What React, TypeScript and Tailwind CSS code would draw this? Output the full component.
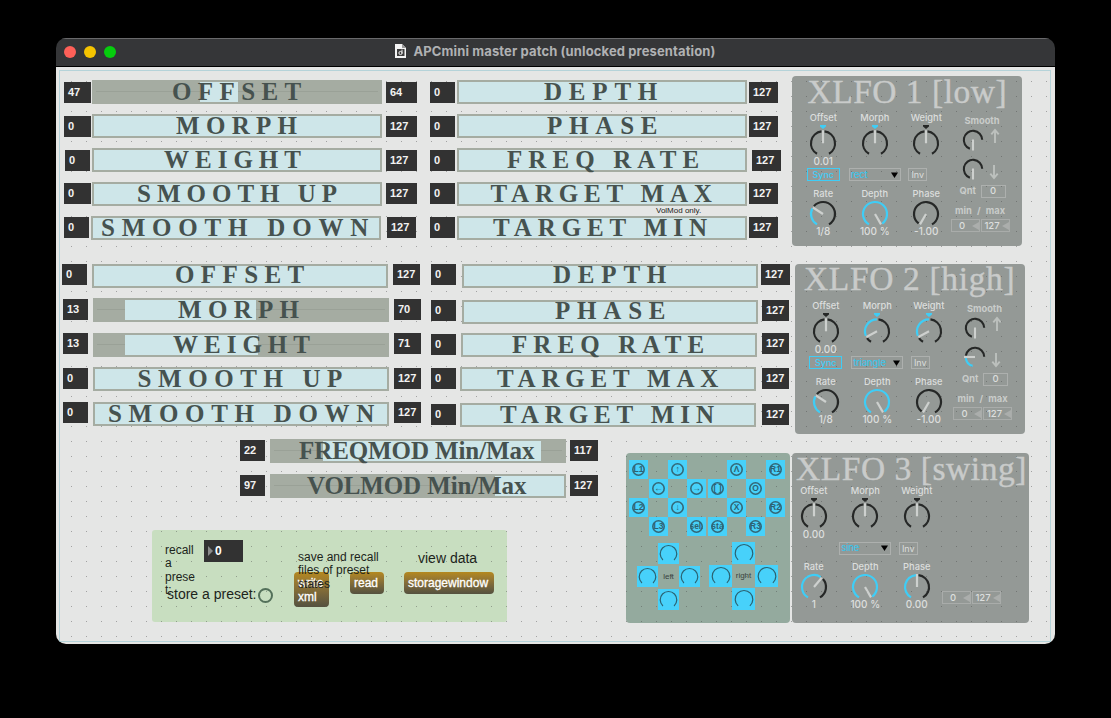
import type { ReactNode } from "react";

const CYAN = "#3fcdf6";
const INK = "#262827";
const PALE = "#cdd0ce";

/* ---------- number boxes and range sliders ---------- */

function NumberBox({ value, className }: { value: number; className: string }) {
  return (
    <div
      className={`flex h-[21px] shrink-0 items-center bg-[#323232] pl-1 font-['Liberation_Sans',sans-serif] text-[11px] leading-none font-bold text-[#f2f2f2] ${className}`}
    >
      {value}
    </div>
  );
}

type RowProps = {
  label: string;
  low?: number;
  high?: number;
  row?: string;
  left: string;
  slider: string;
  right: string;
  text: string;
};

function RangeRow({ label, low = 0, high = 127, row = "", left, slider, right, text }: RowProps) {
  return (
    <div className={`flex h-6 items-start ${row}`}>
      <NumberBox value={low} className={left} />
      <div className={`relative h-6 shrink-0 bg-[#a5aca2] p-0.5 ${slider}`}>
        <div className="relative h-5">
          <div className="absolute inset-x-0.5 top-[9px] h-px bg-[#9aa197]" />
          <div
            className="absolute inset-y-0 bg-[#cee6e9]"
            style={{ left: `${(low / 127) * 100}%`, width: `${((high - low) / 127) * 100}%` }}
          />
        </div>
        <div
          className={`absolute inset-0 font-['Liberation_Serif',serif] text-[25px] leading-6 font-bold whitespace-nowrap text-[#46524f] ${text}`}
        >
          {label}
        </div>
      </div>
      <NumberBox value={high} className={right} />
    </div>
  );
}

function Bank({ className, children }: { className: string; children: ReactNode }) {
  return <div className={`absolute flex flex-col ${className}`}>{children}</div>;
}

/* ---------- dials ---------- */

function polar(cx: number, cy: number, r: number, deg: number) {
  const a = (deg * Math.PI) / 180;
  return [cx + r * Math.sin(a), cy - r * Math.cos(a)];
}

function arc(cx: number, cy: number, r: number, from: number, to: number) {
  const [x1, y1] = polar(cx, cy, r, from);
  const [x2, y2] = polar(cx, cy, r, to);
  return `M${x1} ${y1}A${r} ${r} 0 ${to - from > 180 ? 1 : 0} 1 ${x2} ${y2}`;
}

type DialSpec = { angle: number; dark: [number, number][]; lit?: [number, number]; marker?: string };

function Dial({ spec, top }: { spec: DialSpec; top: boolean }) {
  const cy = top ? 19.3 : 14;
  const { angle, dark, lit, marker } = spec;
  const [nx, ny] = polar(15, cy, angle === 0 ? 13 : 12, angle);
  return (
    <svg width="30" height={top ? 31 : 25} className="block shrink-0 overflow-visible" fill="none" strokeWidth="2.2">
      {marker && <path d="M12 1h6v1.6L15 5l-3-2.4z" fill={marker} />}
      {dark.map(([a, b]) => (
        <path key={a} d={arc(15, cy, 12, a, b)} stroke={INK} />
      ))}
      {lit && <path d={arc(15, cy, 12, lit[0], lit[1])} stroke={CYAN} />}
      <path d={`M15 ${cy}L${nx} ${ny}`} stroke={PALE} />
    </svg>
  );
}

function SmallDial({ lit }: { lit: boolean }) {
  return (
    <svg width="24" height="24" className="block shrink-0" fill="none" strokeWidth="2.1">
      <path d={arc(12, 12, 9.2, lit ? -82 : -160, 88)} stroke={INK} />
      {lit && <path d={arc(12, 12, 9.2, -165, -95)} stroke={CYAN} />}
      <path d={lit ? "M12 12H1" : "M12 11.5V22.5"} stroke={PALE} />
    </svg>
  );
}

function Arrow({ down, className }: { down?: boolean; className: string }) {
  return (
    <svg width="10" height="15" className={`block shrink-0 ${className}`} fill="none" stroke="#bcc0bd" strokeWidth="1.9">
      <path d={down ? "M5 0V13.5M1.3 8.6L5 13L8.7 8.6" : "M5 15V1.5M1.3 6.4L5 2L8.7 6.4"} />
    </svg>
  );
}

function SelectBox({ value }: { value: string }) {
  return (
    <div className="flex h-[13px] w-[52px] shrink-0 items-center justify-between border border-[#adb0ae] pr-[2px] pl-px text-[9.5px] leading-none font-medium text-[#3fc3e8]">
      <span className="tracking-tight">{value}</span>
      <svg width="7" height="6" className="block">
        <path d="M0 .5h7L3.5 6z" fill="#000" />
      </svg>
    </div>
  );
}

function Caption({ children, className = "" }: { children: ReactNode; className?: string }) {
  return (
    <div className={`flex h-3 shrink-0 items-center justify-center text-[9.3px] leading-none font-medium whitespace-nowrap ${className}`}>
      {children}
    </div>
  );
}

function MinMaxBoxes() {
  return (
    <div className="flex gap-px">
      {["0", "127"].map((v) => (
        <div
          key={v}
          className="flex h-[13px] w-[29px] items-center justify-end border border-[#a9acaa] text-[9.5px] leading-none font-medium"
        >
          <span className="flex-1 text-center">{v}</span>
          <svg width="7" height="8" className="-ml-px block shrink-0">
            <path d="M7 0v8L0 4z" fill="#abaeac" />
          </svg>
        </div>
      ))}
    </div>
  );
}

type LfoProps = {
  title: string;
  titleClass: string;
  className: string;
  bodyClass: string;
  wave: string;
  offset: string;
  rate: string;
  phase: string;
  sync?: boolean;
  dials: DialSpec[];
  side: ReactNode;
};

function Lfo({ title, titleClass, className, bodyClass, wave, offset, rate, phase, sync, dials, side }: LfoProps) {
  const columns = [
    {
      top: "Offset",
      value: offset,
      control: sync ? (
        <div className="flex h-[13px] w-[33px] items-center justify-center border border-[#3fcdf6] text-[9px] leading-none font-medium text-[#3fcdf6]">
          Sync
        </div>
      ) : null,
      bottom: "Rate",
      reading: rate,
    },
    { top: "Morph", value: "", control: <SelectBox value={wave} />, bottom: "Depth", reading: "100 %" },
    {
      top: "Weight",
      value: "",
      control: (
        <div className="mr-[17px] flex h-[13px] w-[19px] items-center justify-center border border-[#adb0ae] text-[9px] leading-none">
          Inv
        </div>
      ),
      bottom: "Phase",
      reading: phase,
    },
  ];
  return (
    <div className={`absolute flex h-[170px] flex-col font-[Inter,sans-serif] text-[#dcdedd] ${className}`}>
      <div
        className={`shrink-0 font-['Liberation_Serif',serif] text-[33.5px] leading-[34px] whitespace-nowrap text-[#c9cbca] [-webkit-text-stroke:0.4px_#c9cbca] ${titleClass}`}
      >
        {title}
      </div>
      <div className={`flex ${bodyClass}`}>
        {columns.map((c, i) => (
          <div key={c.top} className="flex w-[51.5px] shrink-0 flex-col items-center">
            <Caption>{c.top}</Caption>
            <Dial spec={dials[i]} top />
            <Caption className="!text-[10px]">{c.value}</Caption>
            <div className="mt-[1.5px] flex h-[13px] justify-center">{c.control}</div>
            <Caption className="mt-[6.5px]">{c.bottom}</Caption>
            <Dial spec={dials[i + 3]} top={false} />
            <Caption className="!text-[10px]">{c.reading}</Caption>
          </div>
        ))}
        {side}
      </div>
    </div>
  );
}

function SmoothSide({ lit }: { lit: boolean }) {
  return (
    <div className="-ml-[1.5px] flex w-[59px] shrink-0 flex-col pt-[3px]">
      <Caption className="pl-1 !font-bold text-[#c9ccca]">Smooth</Caption>
      <div className="mt-px flex h-[29px] pl-[10px]">
        <SmallDial lit={false} />
        <Arrow className="ml-[5px]" />
      </div>
      <div className="flex h-[28px] pl-[10px]">
        <SmallDial lit={lit} />
        <Arrow down className="mt-[8px] ml-[4px]" />
      </div>
      <div className="flex h-[13px] items-center pl-[9px]">
        <span className="w-[21px] text-[9.3px] leading-none font-bold text-[#c9ccca]">Qnt</span>
        <div className="flex h-[13px] w-[25px] items-center justify-center border border-[#adb0ae] text-[9.5px] leading-none font-medium">
          0
        </div>
      </div>
      <Caption className="mt-[7.5px] mb-[2px] !font-bold [word-spacing:3px] text-[#c9ccca]">min / max</Caption>
      <MinMaxBoxes />
    </div>
  );
}

/* ---------- game pad ---------- */

const PAD: (string | null)[] = [
  "L1", null, "↑", null, null, "Λ", null, "R1",
  null, "←", null, "→", "[ ]", null, "O", null,
  "L2", null, "↓", null, null, "X", null, "R2",
  null, "L3", null, "sel.", "sta", null, "R3", null,
];

function PadButtons() {
  return (
    <div className="absolute top-[392px] left-[573px] grid auto-rows-[19px] grid-cols-[20px_19px_19px_21px_19px_19px_20px_19px] pt-px">
      {PAD.map((t, i) => (
        <div key={i} className={t ? "flex size-[19px] items-center justify-center bg-[#47d1fa]" : ""}>
          {t && (
            <div className="flex size-[13px] items-center justify-center overflow-hidden rounded-full text-[8.5px] leading-none font-bold whitespace-nowrap text-[#2d6273] ring-[1.6px] ring-[#346878] ring-inset">
              {t}
            </div>
          )}
        </div>
      ))}
    </div>
  );
}

function Stick({ label, className, size }: { label: string; className: string; size: number }) {
  const r = size / 2 - 2.2;
  return (
    <div className={`absolute grid ${className}`}>
      {Array.from({ length: 9 }, (_, i) =>
        i === 4 ? (
          <div key={i} className="flex items-center justify-center text-[8px] text-[#39443f]">
            {label}
          </div>
        ) : i % 2 === 1 ? (
          <div key={i} className="flex items-center justify-center bg-[#47d1fa]">
            <svg width={size} height={size} className="block" fill="none">
              <path d={arc(size / 2, size / 2 + 0.3, r, -138, 138)} stroke="#2b6272" strokeWidth="1.2" />
            </svg>
          </div>
        ) : (
          <div key={i} />
        )
      )}
    </div>
  );
}

/* ---------- presets ---------- */

function Message({ children, className }: { children: ReactNode; className: string }) {
  return (
    <div
      className={`absolute flex rounded-[4px] bg-linear-to-b from-[#b5891d] to-[#54513f] pl-1 text-[12px] text-white [-webkit-text-stroke:0.3px_white] ${className}`}
    >
      {children}
    </div>
  );
}

function Presets() {
  return (
    <div className="absolute top-[463px] left-24 h-[92px] w-[355px] font-['Liberation_Sans',sans-serif] text-[#1c241b]">
      <div className="absolute top-[14px] left-[13px] w-[30px] text-[12px] leading-[13.4px]">
        recall
        <br />a<br />
        prese
        <br />
        t:
      </div>
      <div className="absolute top-[10px] left-[52px] flex h-[22px] w-[39px] items-center bg-[#323232] pl-1 text-[12px] font-bold text-white">
        <svg width="5" height="10" className="mr-[2px] block">
          <path d="M0 0v10l5-5z" fill="#8a8a8a" />
        </svg>
        0
      </div>
      <div className="absolute top-[55px] left-[15px] flex items-center text-[14px] leading-4 whitespace-nowrap">
        store a preset:
        <span className="mt-[3px] ml-px size-[15px] rounded-full border-2 border-[#53705a]" />
      </div>
      <Message className="top-[42px] left-[142px] h-[35px] w-[35px] pt-[4px] leading-[14px]">
        write
        <br />
        xml
      </Message>
      <Message className="top-[42px] left-[198px] h-[22px] w-[34px] items-center leading-none">read</Message>
      <Message className="top-[42px] left-[252px] h-[22px] w-[90px] items-center leading-none">storagewindow</Message>
      <div className="absolute top-[21px] left-[146px] w-[86px] text-[12px] leading-[13.3px] whitespace-nowrap">
        save and recall
        <br />
        files of preset
        <br />
        states
      </div>
      <div className="absolute top-[20px] left-[266px] text-[14px] leading-4 whitespace-nowrap">view data</div>
    </div>
  );
}

/* ---------- window ---------- */

function TitleBar() {
  return (
    <header className="relative flex h-[29px] shrink-0 items-center justify-center border-t border-b border-t-[#69696b] border-b-black bg-[#353638]">
      <div className="absolute top-[7px] left-2 flex gap-2">
        <i className="size-3 rounded-full bg-[#fe6058]" />
        <i className="size-3 rounded-full bg-[#f5c400]" />
        <i className="size-3 rounded-full bg-[#06cd0d]" />
      </div>
      <svg width="11" height="14" viewBox="0 0 11 14" className="-mt-[3px] mr-[7px] block">
        <path d="M0 0h7l4 4v10H0z" fill="#f4f4f4" />
        <path d="M7 0v4h4" fill="#9a9a9a" />
        <rect x="2" y="5" width="7.5" height="7" fill="#3c3c3c" />
        <circle cx="5.5" cy="9" r="1.6" fill="none" stroke="#eee" strokeWidth="1" />
        <path d="M7 9.5V5.6" stroke="#eee" strokeWidth="1" />
      </svg>
      <span className="-mt-[2px] font-[Inter,sans-serif] text-[13px] leading-none font-bold tracking-[0.12px] whitespace-nowrap text-[#b0b1b3]">
        APCmini master patch (unlocked presentation)
      </span>
    </header>
  );
}

const halves: [number, number][] = [[-150, -7], [7, 150]];
const centre: DialSpec = { angle: 0, dark: halves, marker: INK };
const centreLit: DialSpec = { angle: 0, dark: halves, marker: CYAN };
const full: DialSpec = { angle: 150, dark: [], lit: [-150, 143] };
const eighth: DialSpec = { angle: -57, dark: [[-49, 150]], lit: [-150, -62] };
const swung: DialSpec = { angle: -118, dark: [[-150, -124], [7, 150]], lit: [-112, 0], marker: CYAN };
const minimum: DialSpec = { angle: -150, dark: [[-142, 150]] };

export default function App() {
  return (
    <div className="h-[718px] w-[1111px] overflow-hidden bg-black pt-[38px] pl-14">
      <main className="flex h-[606px] w-[999px] flex-col overflow-hidden rounded-[10px]">
        <TitleBar />
        <section className="relative flex-1 bg-[#e5e6e5]">
          <div className="absolute top-[9px] left-[736px] h-[170px] w-[230px] rounded-[4px] bg-[#949996]" />
          <div className="absolute top-[197px] left-[739px] h-[170px] w-[230px] rounded-[4px] bg-[#949996]" />
          <div className="absolute top-[386px] left-[736px] h-[170px] w-[237px] rounded-[4px] bg-[#949996]" />
          <div className="absolute top-[386px] left-[570px] h-[170px] w-[164px] rounded-[4px] bg-[#94aa9e]" />
          <div className="absolute top-[463px] left-24 h-[92px] w-[355px] rounded-[3px] bg-[#c8dec0]" />
          <div className="absolute top-[3px] right-1 bottom-[2px] left-[3px] border border-[#b5d3d9] bg-[radial-gradient(circle_at_0.5px_0.5px,rgba(70,70,70,0.42)_0.6px,transparent_0.8px)] bg-[size:15px_15px] bg-[position:11px_10px]" />

          <Bank className="top-[13px] left-2">
            <RangeRow label="OFFSET" low={47} high={64} left="mt-0.5 w-[27px]" slider="ml-px w-[290px]" right="mt-0.5 ml-1 w-[31px]" text="pl-[80px] tracking-[6.4px]" />
            <RangeRow label="MORPH" row="mt-2.5" left="mt-0.5 w-[27px]" slider="ml-px w-[290px]" right="mt-0.5 ml-1 w-[31px]" text="pl-[84px] tracking-[6.3px]" />
            <RangeRow label="WEIGHT" row="mt-2.5" left="mt-0.5 ml-px w-[25px]" slider="ml-0.5 w-[290px]" right="mt-0.5 ml-1 w-[31px]" text="pl-[72px] tracking-[6px]" />
            <RangeRow label="SMOOTH UP" row="mt-2.5" left="mt-px w-[27px]" slider="ml-px w-[290px]" right="mt-px ml-1 w-[31px]" text="pl-[45px] tracking-[6px]" />
            <RangeRow label="SMOOTH DOWN" row="mt-2.5" left="mt-px w-[25px]" slider="ml-0.5 w-[290px]" right="mt-px ml-1.5 w-[29px]" text="pl-[10px] tracking-[6.8px]" />
          </Bank>

          <Bank className="top-[13px] left-[374px]">
            <RangeRow label="DEPTH" left="mt-0.5 w-[25px]" slider="ml-0.5 w-[290px]" right="mt-0.5 ml-0.5 w-[29px]" text="pl-[87px] tracking-[6.8px]" />
            <RangeRow label="PHASE" row="mt-2.5" left="mt-0.5 w-[25px]" slider="ml-0.5 w-[290px]" right="mt-0.5 ml-0.5 w-[29px]" text="pl-[90px] tracking-[6.8px]" />
            <RangeRow label="FREQ RATE" row="mt-2.5" left="mt-0.5 w-[25px]" slider="ml-0.5 w-[290px]" right="mt-0.5 ml-[5px] w-[29px]" text="pl-[50px] tracking-[6.1px]" />
            <RangeRow label="TARGET MAX" row="mt-2.5" left="mt-px w-[25px]" slider="ml-0.5 w-[290px]" right="mt-px ml-0.5 w-[29px]" text="pl-[33.5px] tracking-[5.8px]" />
            <RangeRow label="TARGET MIN" row="mt-2.5" left="mt-px w-[25px]" slider="ml-0.5 w-[290px]" right="mt-px ml-0.5 w-[29px]" text="pl-[36px] tracking-[5.9px]" />
          </Bank>
          <div className="absolute top-[139px] left-[600px] font-['Liberation_Sans',sans-serif] text-[8px] leading-[9px] whitespace-nowrap text-[#222]">
            VolMod only.
          </div>

          <Bank className="top-[197px] left-1.5">
            <RangeRow label="OFFSET" left="w-[25px]" slider="ml-[5px] w-[296px]" right="ml-[5px] w-[27px]" text="-mt-px pl-[83px] tracking-[6.4px]" />
            <RangeRow label="MORPH" low={13} high={70} row="mt-2.5 ml-px" left="mt-px w-[25px]" slider="ml-[5px] w-[296px]" right="mt-px ml-[5px] w-[27px]" text="pl-[85px] tracking-[6.3px]" />
            <RangeRow label="WEIGHT" low={13} high={71} row="mt-[11px] ml-px" left="w-[25px]" slider="ml-[5px] w-[296px]" right="ml-[5px] w-[27px]" text="pl-[80px] tracking-[6px]" />
            <RangeRow label="SMOOTH UP" row="mt-2.5 ml-px" left="mt-px w-[25px]" slider="ml-[5px] w-[296px]" right="mt-px ml-[5px] w-[27px]" text="pl-[44.5px] tracking-[6.6px]" />
            <RangeRow label="SMOOTH DOWN" row="mt-[11px] ml-px" left="w-[25px]" slider="ml-[5px] w-[296px]" right="ml-[5px] w-[27px]" text="pl-[15px] tracking-[6.7px]" />
          </Bank>

          <Bank className="top-[197px] left-[375px]">
            <RangeRow label="DEPTH" left="w-[25px]" slider="ml-1.5 w-[296px]" right="ml-[3px] w-[29px]" text="-mt-px pl-[91px] tracking-[6.8px]" />
            <RangeRow label="PHASE" row="mt-3" left="w-[25px]" slider="ml-1.5 w-[296px]" right="ml-1 w-[27px]" text="-mt-px pl-[93px] tracking-[6.8px]" />
            <RangeRow label="FREQ RATE" row="mt-[9px]" left="mt-px w-[25px]" slider="ml-[5px] w-[296px]" right="ml-[5px] w-[27px]" text="pl-[51px] tracking-[6.1px]" />
            <RangeRow label="TARGET MAX" row="mt-2.5" left="mt-px w-[25px]" slider="ml-1 w-[296px]" right="mt-px ml-1.5 w-[27px]" text="pl-[37px] tracking-[5.8px]" />
            <RangeRow label="TARGET MIN" row="mt-3" left="mt-px w-[25px]" slider="ml-1 w-[296px]" right="mt-px ml-1.5 w-[27px]" text="pl-[40px] tracking-[5.9px]" />
          </Bank>

          <Bank className="top-[372px] left-[184px]">
            <RangeRow label="FREQMOD Min/Max" low={22} high={117} left="mt-px w-[25px]" slider="ml-[5px] w-[296px]" right="mt-px ml-1 w-[28px]" text="pl-[29px] tracking-[-0.1px]" />
            <RangeRow label="VOLMOD Min/Max" low={97} row="mt-[11px]" left="mt-px w-[25px]" slider="ml-[5px] w-[296px]" right="mt-px ml-1 w-[28px]" text="pl-[37px] tracking-[-0.12px]" />
          </Bank>

          <Lfo
            title="XLFO 1 [low]"
            titleClass="-mt-px pl-[15.5px] tracking-[0.5px]"
            className="top-[9px] left-[736px] w-[230px]"
            bodyClass="mt-[2.5px] pl-[5.5px]"
            wave="rect"
            offset="0.01"
            rate="1/8"
            phase="-1.00"
            sync
            dials={[centreLit, centreLit, centre, eighth, full, minimum]}
            side={<SmoothSide lit={false} />}
          />
          <Lfo
            title="XLFO 2 [high]"
            titleClass="-mt-[2px] pl-[9px] tracking-[0.65px]"
            className="top-[197px] left-[739px] w-[230px]"
            bodyClass="mt-[3.5px] pl-[5px]"
            wave="triangle"
            offset="0.00"
            rate="1/8"
            phase="-1.00"
            sync
            dials={[centre, swung, swung, eighth, full, minimum]}
            side={<SmoothSide lit />}
          />
          <Lfo
            title="XLFO 3 [swing]"
            titleClass="-mt-px pl-1 tracking-[0.55px]"
            className="top-[386px] left-[736px] w-[237px]"
            bodyClass="-mt-px -ml-1"
            wave="sine"
            offset="0.00"
            rate="1"
            phase="0.00"
            dials={[
              centre,
              centre,
              centre,
              { angle: 40, dark: [[48, 150]], lit: [-150, 34] },
              full,
              { angle: 0, dark: [[7, 150]], lit: [-150, -4] },
            ]}
            side={
              <div className="-ml-px flex shrink-0 items-start pt-[106px]">
                <MinMaxBoxes />
              </div>
            }
          />

          <div className="font-['Liberation_Sans',sans-serif]">
            <PadButtons />
            <Stick label="left" size={21} className="top-[476px] left-[581px] auto-rows-[21px] grid-cols-[21px_21px_21px] gap-y-0.5" />
            <Stick label="right" size={22} className="top-[475px] left-[653px] auto-rows-[22px] grid-cols-[23px_23px_23px] gap-y-px" />
          </div>

          <Presets />
        </section>
      </main>
    </div>
  );
}
